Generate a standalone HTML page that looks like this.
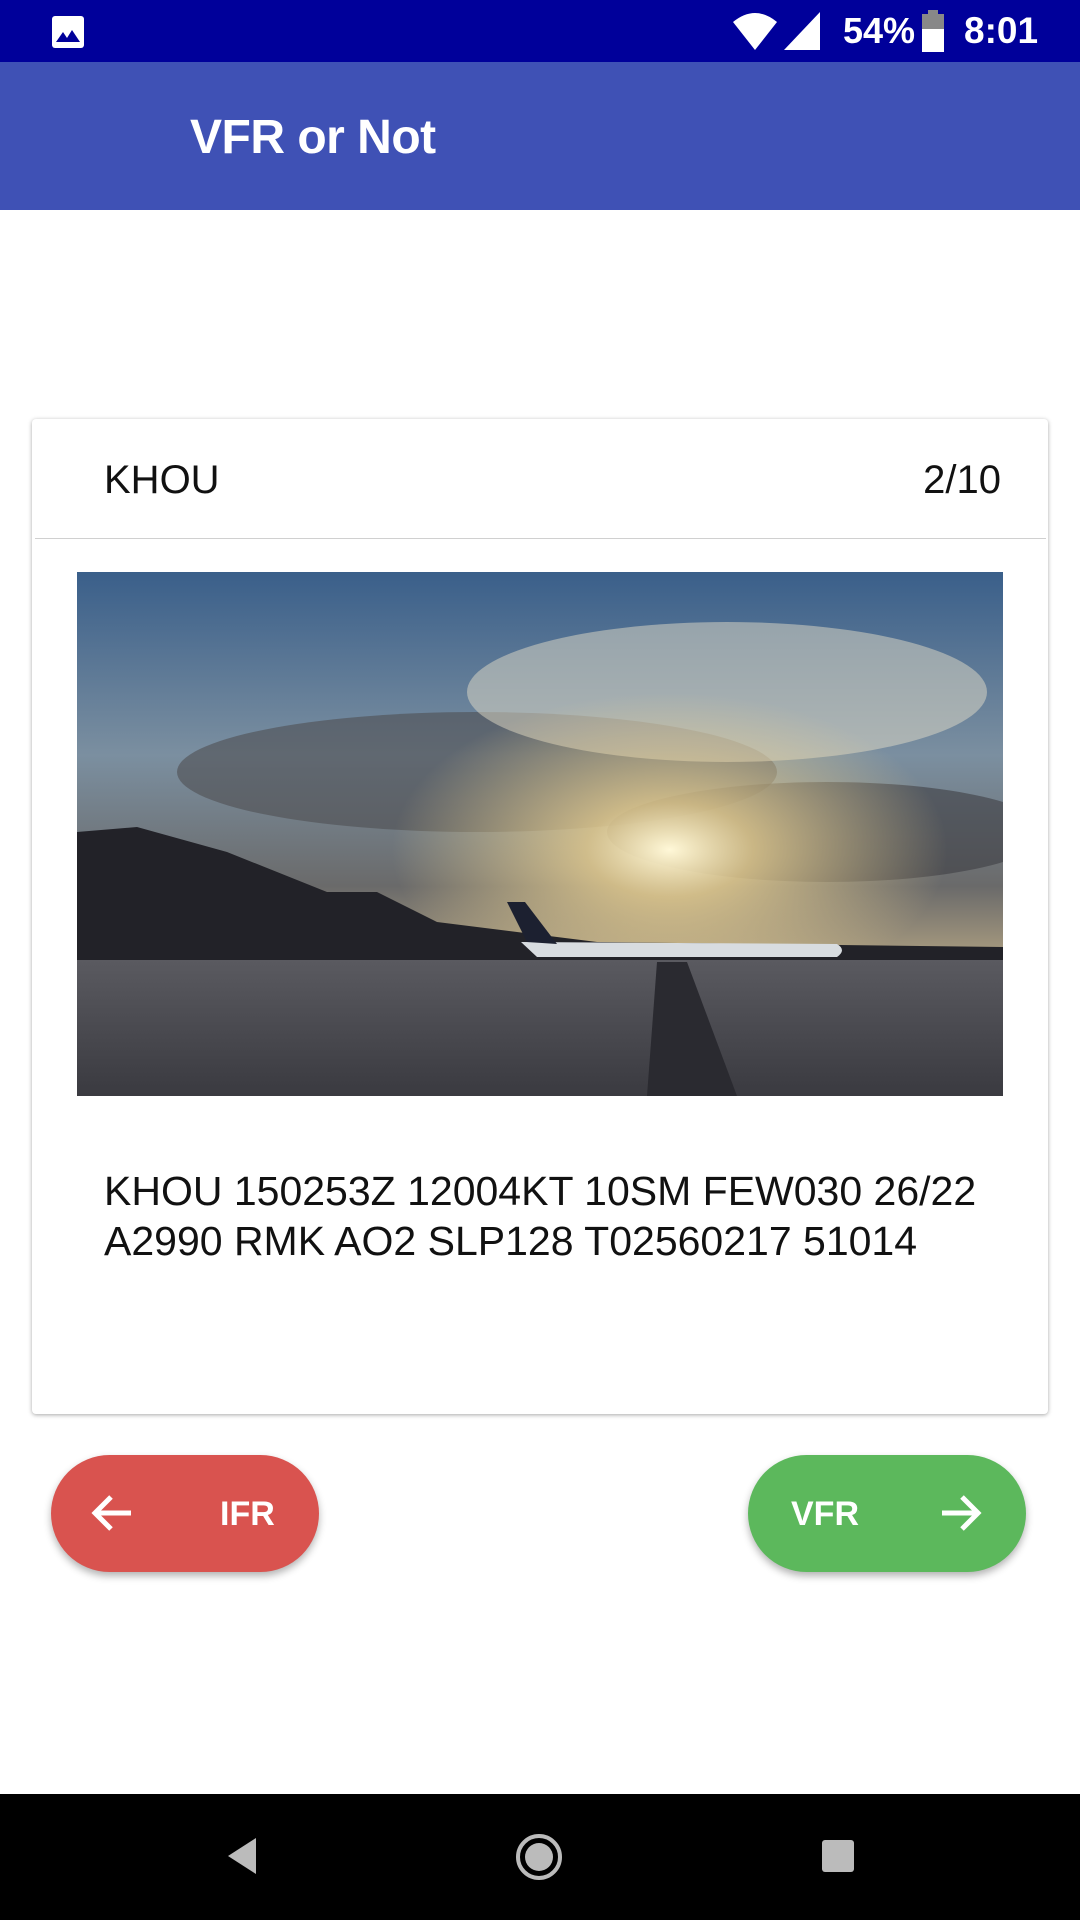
<!DOCTYPE html>
<html><head><meta charset="utf-8"><style>
*{margin:0;padding:0;box-sizing:border-box}
body{width:1080px;height:1920px;background:#fff;font-family:"Liberation Sans",Roboto,sans-serif;position:relative;overflow:hidden}
.sb{position:absolute;left:0;top:0;width:1080px;height:62px;background:#00009a;color:#fff}
.ab{position:absolute;left:0;top:62px;width:1080px;height:148px;background:#3f51b5;color:#fff}
.ab h1{position:absolute;left:190px;top:48px;font-size:48px;font-weight:bold;letter-spacing:-0.5px}
.card{position:absolute;left:32px;top:419px;width:1016px;height:995px;background:#fff;border-radius:4px;box-shadow:0 1px 4px rgba(0,0,0,.35)}
.hd{position:absolute;left:104px;top:458px;font-size:40px;color:#111}
.pg{position:absolute;right:79px;top:458px;font-size:40px;color:#111}
.div{position:absolute;left:35px;top:538px;width:1011px;height:1px;background:#d0d0d0}
.img{position:absolute;left:77px;top:572px;width:926px;height:524px}
.metar{position:absolute;left:104px;top:1166px;font-size:41px;line-height:50px;color:#111;width:920px}
.btn{position:absolute;top:1455px;height:117px;border-radius:59px;color:#fff;font-size:34px;font-weight:bold;box-shadow:0 4px 8px rgba(0,0,0,.3)}
.ifr{left:51px;width:268px;background:#d9534f}
.vfr{left:748px;width:278px;background:#5cb85c}
.nav{position:absolute;left:0;top:1794px;width:1080px;height:126px;background:#000}
</style></head><body>
<div class="sb">
<svg style="position:absolute;left:50px;top:14px" width="36" height="36" viewBox="0 0 36 36"><rect x="2" y="2" width="32" height="32" rx="3" fill="#fff"/><path d="M6 28 L13 18 L17 24 L22 16 L30 28 Z" fill="#00009a"/></svg>
<svg style="position:absolute;left:732px;top:12px" width="46" height="38" viewBox="0 0 46 38"><path d="M23 38 L1 10 Q23 -8 45 10 Z" fill="#fff"/></svg>
<svg style="position:absolute;left:784px;top:12px" width="36" height="38" viewBox="0 0 36 38"><path d="M0 38 L36 0 L36 38 Z" fill="#fff"/></svg>
<div style="position:absolute;left:843px;top:10px;font-size:36px;font-weight:bold">54%</div>
<svg style="position:absolute;left:922px;top:10px" width="22" height="42" viewBox="0 0 22 42"><rect x="6" y="0" width="10" height="5" fill="#888"/><rect x="0" y="4" width="22" height="38" fill="#888"/><rect x="0" y="19" width="22" height="23" fill="#fff"/></svg>
<div style="position:absolute;left:964px;top:10px;font-size:37px;font-weight:bold">8:01</div>
</div>
<div class="ab"><h1>VFR or Not</h1></div>
<div class="card"></div>
<div class="hd">KHOU</div><div class="pg">2/10</div>
<div class="div"></div>
<svg class="img" viewBox="0 0 926 524" preserveAspectRatio="none">
<defs>
<linearGradient id="sky" x1="0" y1="0" x2="0" y2="1"><stop offset="0" stop-color="#3a5f8a"/><stop offset=".35" stop-color="#7b8fa0"/><stop offset=".6" stop-color="#6a6a6a"/><stop offset=".8" stop-color="#c8b48a"/></linearGradient>
<radialGradient id="sun" cx=".64" cy=".53" r=".3"><stop offset="0" stop-color="#fff8d8"/><stop offset=".3" stop-color="#e8cf90" stop-opacity=".8"/><stop offset="1" stop-color="#e8cf90" stop-opacity="0"/></radialGradient>
<linearGradient id="gr" x1="0" y1="0" x2="0" y2="1"><stop offset="0" stop-color="#5a5a60"/><stop offset="1" stop-color="#3a3a40"/></linearGradient>
</defs>
<rect width="926" height="524" fill="url(#sky)"/>
<ellipse cx="400" cy="200" rx="300" ry="60" fill="#4e4e52" opacity=".6"/>
<ellipse cx="650" cy="120" rx="260" ry="70" fill="#e2dcc8" opacity=".5"/>
<ellipse cx="750" cy="260" rx="220" ry="50" fill="#3e3e42" opacity=".6"/>
<rect width="926" height="524" fill="url(#sun)"/>
<path d="M0 260 L60 255 L150 280 L250 320 L300 320 L360 350 L520 370 L926 375 L926 390 L0 390 Z" fill="#222228"/>
<rect y="388" width="926" height="136" fill="url(#gr)"/>
<path d="M580 390 L610 390 L660 524 L570 524 Z" fill="#2a2a30"/>
<path d="M444 370 L760 372 Q770 378 760 385 L460 385 Z" fill="#d8dce0"/>
<path d="M450 370 L430 330 L448 330 L480 372 Z" fill="#1c2030"/>
</svg>
<div class="metar">KHOU 150253Z 12004KT 10SM FEW030 26/22 A2990 RMK AO2 SLP128 T02560217 51014</div>
<div class="btn ifr">
<svg style="position:absolute;left:40px;top:38px" width="42" height="40" viewBox="0 0 42 40"><path d="M40 20 H4 M20 4 L4 20 L20 36" stroke="#fff" stroke-width="5" fill="none"/></svg>
<span style="position:absolute;left:169px;top:40px">IFR</span></div>
<div class="btn vfr">
<span style="position:absolute;left:43px;top:40px">VFR</span>
<svg style="position:absolute;left:192px;top:38px" width="42" height="40" viewBox="0 0 42 40"><path d="M2 20 H38 M22 4 L38 20 L22 36" stroke="#fff" stroke-width="5" fill="none"/></svg></div>
<div class="nav">
<svg style="position:absolute;left:224px;top:42px" width="36" height="40" viewBox="0 0 36 40"><path d="M32 2 L4 20 L32 38 Z" fill="#bbb"/></svg>
<svg style="position:absolute;left:514px;top:38px" width="50" height="50" viewBox="0 0 50 50"><circle cx="25" cy="25" r="21" stroke="#bbb" stroke-width="4" fill="none"/><circle cx="25" cy="25" r="14" fill="#bbb"/></svg>
<div style="position:absolute;left:822px;top:46px;width:32px;height:32px;background:#bbb;border-radius:3px"></div>
</div>
</body></html>
